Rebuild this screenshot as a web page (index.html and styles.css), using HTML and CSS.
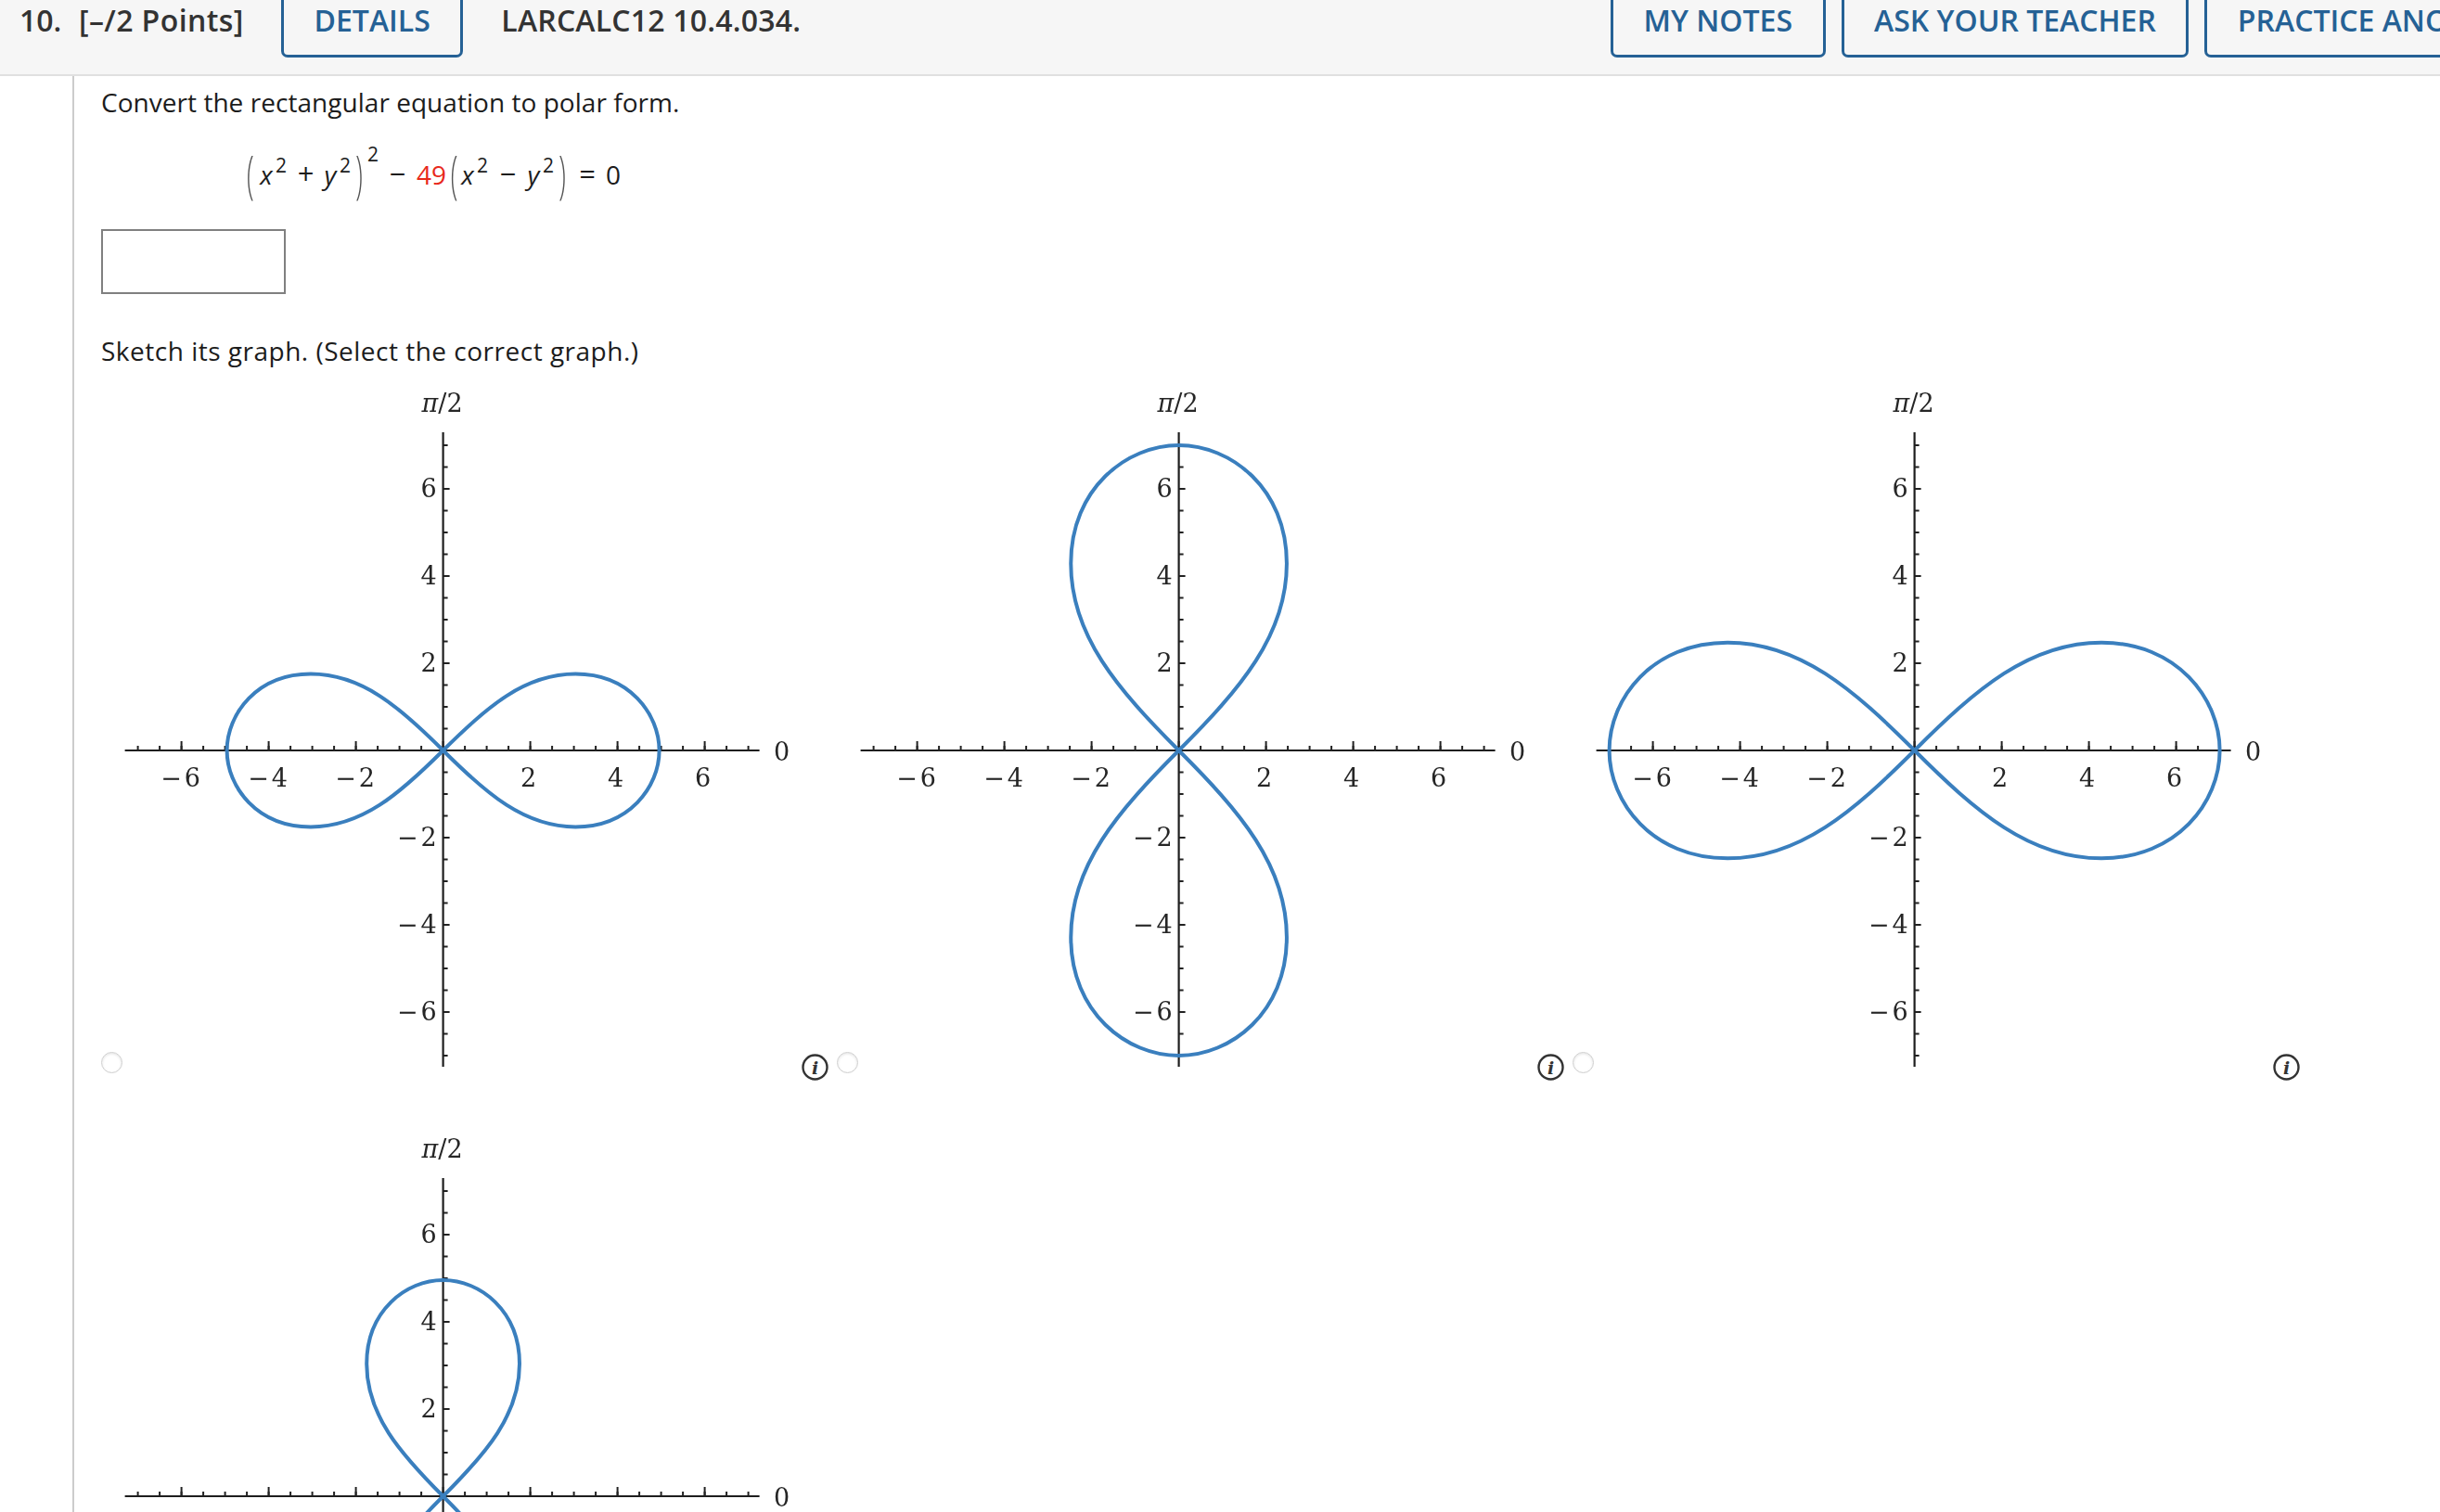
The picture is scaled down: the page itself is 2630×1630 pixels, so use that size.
FILE: index.html
```html
<!DOCTYPE html>
<html lang="en">
<head>
<meta charset="utf-8">
<title>LARCALC12 10.4.034</title>
<link rel="stylesheet" href="styles.css">
</head>
<body>
<svg class="defs" width="0" height="0" aria-hidden="true">
  <defs>
    <path id="lobes" d="M0 0C.2 -.2 .3764 -.3536 .6124 -.3536C.8594 -.3536 1 -.17 1 0C1 .17 .8594 .3536 .6124 .3536C.3764 .3536 .2 .2 0 0C-.2 -.2 -.3764 -.3536 -.6124 -.3536C-.8594 -.3536 -1 -.17 -1 0C-1 .17 -.8594 .3536 -.6124 .3536C-.3764 .3536 -.2 .2 0 0Z"/>
    <g id="axes">
      <line class="axis" x1="-343" y1="0" x2="341" y2="0"/>
      <line class="axis" x1="0" y1="-343" x2="0" y2="341"/>
      <line class="tick-minor" x1="-330" y1="-2.5" x2="330" y2="-2.5"/>
      <line class="tick-major-x" x1="-283" y1="-5" x2="284" y2="-5"/>
      <line class="tick-minor" x1="2.5" y1="-330" x2="2.5" y2="330"/>
      <line class="tick-major-y" x1="3.5" y1="-283" x2="3.5" y2="284"/>
    </g>
  </defs>
</svg>

<header class="qbar">
  <div class="qinfo">
    <span class="qnum">10.</span>
    <span class="qpts">[–/2 Points]</span>
    <a class="btn btn-details">DETAILS</a>
    <span class="qcode">LARCALC12 10.4.034.</span>
  </div>
  <a class="btn">MY NOTES</a>
  <a class="btn">ASK YOUR TEACHER</a>
  <a class="btn">PRACTICE ANOTHER</a>
</header>

<main class="qbody">
  <p class="line line-first">Convert the rectangular equation to polar form.</p>
  <div class="eq">
    <span class="paren paren-first">(</span><i class="v">x</i><span class="sup">2</span><span class="op op-plus">+</span><i class="v">y</i><span class="sup">2</span><span class="paren">)</span><span class="sup sup-hi">2</span><span class="op op-minus">−</span><span class="coef">49</span><span class="paren paren-b">(</span><i class="v">x</i><span class="sup">2</span><span class="op op-minus2">−</span><i class="v">y</i><span class="sup">2</span><span class="paren">)</span><span class="op op-eq">=</span><span class="zero">0</span>
  </div>
  <div class="answer"></div>
  <p class="line line-sketch">Sketch its graph. (Select the correct graph.)</p>

  <div class="choices">
    <div class="choice">
      <input class="radio" type="radio" name="graph">
      <svg class="plot" viewBox="-345.6 -389 732 740">
        <use href="#axes"/>
        <use href="#lobes" class="curve" transform="scale(233)"/>
        <text class="lbl" x="-1" y="-365"><tspan class="pi">π</tspan>/2</text>
        <text class="lbl" x="365" y="10.5">0</text>
        <text class="lbl" x="-283" y="38.5">−&#8202;6</text><text class="lbl" x="-189" y="38.5">−&#8202;4</text><text class="lbl" x="-95" y="38.5">−&#8202;2</text><text class="lbl" x="92" y="38.5">2</text><text class="lbl" x="186" y="38.5">4</text><text class="lbl" x="280" y="38.5">6</text>
        <text class="lbl lbl-y" x="-7" y="-273.5">6</text><text class="lbl lbl-y" x="-7" y="-179.5">4</text><text class="lbl lbl-y" x="-7" y="-85.5">2</text><text class="lbl lbl-y" x="-7" y="102.5">−&#8202;2</text><text class="lbl lbl-y" x="-7" y="196.5">−&#8202;4</text><text class="lbl lbl-y" x="-7" y="290.5">−&#8202;6</text>
      </svg>
      <svg class="info" viewBox="0 0 29 29"><circle cx="14.5" cy="14.5" r="13"/><text x="14.5" y="21.5">i</text></svg>
    </div>
    <div class="choice">
      <input class="radio" type="radio" name="graph">
      <svg class="plot" viewBox="-345.6 -389 732 740">
        <use href="#axes"/>
        <use href="#lobes" class="curve" transform="rotate(90) scale(329)"/>
        <text class="lbl" x="-1" y="-365"><tspan class="pi">π</tspan>/2</text>
        <text class="lbl" x="365" y="10.5">0</text>
        <text class="lbl" x="-283" y="38.5">−&#8202;6</text><text class="lbl" x="-189" y="38.5">−&#8202;4</text><text class="lbl" x="-95" y="38.5">−&#8202;2</text><text class="lbl" x="92" y="38.5">2</text><text class="lbl" x="186" y="38.5">4</text><text class="lbl" x="280" y="38.5">6</text>
        <text class="lbl lbl-y" x="-7" y="-273.5">6</text><text class="lbl lbl-y" x="-7" y="-179.5">4</text><text class="lbl lbl-y" x="-7" y="-85.5">2</text><text class="lbl lbl-y" x="-7" y="102.5">−&#8202;2</text><text class="lbl lbl-y" x="-7" y="196.5">−&#8202;4</text><text class="lbl lbl-y" x="-7" y="290.5">−&#8202;6</text>
      </svg>
      <svg class="info" viewBox="0 0 29 29"><circle cx="14.5" cy="14.5" r="13"/><text x="14.5" y="21.5">i</text></svg>
    </div>
    <div class="choice">
      <input class="radio" type="radio" name="graph">
      <svg class="plot" viewBox="-345.6 -389 732 740">
        <use href="#axes"/>
        <use href="#lobes" class="curve" transform="scale(329)"/>
        <text class="lbl" x="-1" y="-365"><tspan class="pi">π</tspan>/2</text>
        <text class="lbl" x="365" y="10.5">0</text>
        <text class="lbl" x="-283" y="38.5">−&#8202;6</text><text class="lbl" x="-189" y="38.5">−&#8202;4</text><text class="lbl" x="-95" y="38.5">−&#8202;2</text><text class="lbl" x="92" y="38.5">2</text><text class="lbl" x="186" y="38.5">4</text><text class="lbl" x="280" y="38.5">6</text>
        <text class="lbl lbl-y" x="-7" y="-273.5">6</text><text class="lbl lbl-y" x="-7" y="-179.5">4</text><text class="lbl lbl-y" x="-7" y="-85.5">2</text><text class="lbl lbl-y" x="-7" y="102.5">−&#8202;2</text><text class="lbl lbl-y" x="-7" y="196.5">−&#8202;4</text><text class="lbl lbl-y" x="-7" y="290.5">−&#8202;6</text>
      </svg>
      <svg class="info" viewBox="0 0 29 29"><circle cx="14.5" cy="14.5" r="13"/><text x="14.5" y="21.5">i</text></svg>
    </div>
    <div class="choice">
      <input class="radio" type="radio" name="graph">
      <svg class="plot" viewBox="-345.6 -389 732 740">
        <use href="#axes"/>
        <use href="#lobes" class="curve" transform="rotate(90) scale(233)"/>
        <text class="lbl" x="-1" y="-365"><tspan class="pi">π</tspan>/2</text>
        <text class="lbl" x="365" y="10.5">0</text>
        <text class="lbl" x="-283" y="38.5">−&#8202;6</text><text class="lbl" x="-189" y="38.5">−&#8202;4</text><text class="lbl" x="-95" y="38.5">−&#8202;2</text><text class="lbl" x="92" y="38.5">2</text><text class="lbl" x="186" y="38.5">4</text><text class="lbl" x="280" y="38.5">6</text>
        <text class="lbl lbl-y" x="-7" y="-273.5">6</text><text class="lbl lbl-y" x="-7" y="-179.5">4</text><text class="lbl lbl-y" x="-7" y="-85.5">2</text><text class="lbl lbl-y" x="-7" y="102.5">−&#8202;2</text><text class="lbl lbl-y" x="-7" y="196.5">−&#8202;4</text><text class="lbl lbl-y" x="-7" y="290.5">−&#8202;6</text>
      </svg>
      <svg class="info" viewBox="0 0 29 29"><circle cx="14.5" cy="14.5" r="13"/><text x="14.5" y="21.5">i</text></svg>
    </div>
  </div>
</main>
</body>
</html>
```

FILE: styles.css
```css
html, body {
  margin: 0;
  height: 1630px;
  overflow: hidden;
  background: #fff;
  font-family: "Open Sans", "Noto Sans", sans-serif;
  color: #1c1c1c;
}
.defs { display: block; height: 0; }

/* question header */
.qbar {
  display: flex;
  align-items: flex-start;
  height: 80px;
  padding-left: 21px;
  background: #f6f6f6;
  border-bottom: 2px solid #e0e0e0;
  font-size: 32px;
  font-weight: 600;
  line-height: 44px;
  white-space: nowrap;
  overflow: hidden;
}
.qinfo { display: flex; flex: 0 0 1715px; align-items: flex-start; color: #333; }
.qnum { width: 64px; }
.qpts { width: 218px; letter-spacing: 0.4px; }
.qcode { margin-left: 41px; letter-spacing: 0.2px; }
.btn {
  flex: none;
  height: 62px;
  box-sizing: border-box;
  padding: 0 32.5px;
  margin-right: 17px;
  border: 3px solid #256195;
  border-top: 0;
  border-radius: 0 0 7px 7px;
  color: #256195;
}
.btn-details { margin-right: 0; }

/* question body */
.qbody {
  margin-left: 78px;
  padding: 8px 0 0 29px;
  border-left: 2px solid #ccc;
  height: 1540px;
}
.line { margin: 0; font-size: 28px; line-height: 40px; }
.line-first { letter-spacing: 0.04px; }
.line-sketch { letter-spacing: 0.5px; }

/* equation: each token sits in a fixed slot, as in typeset math */
.eq {
  display: flex;
  align-items: baseline;
  height: 117px;
  box-sizing: border-box;
  margin-left: 157px;
  padding-top: 37px;
  font-size: 28px;
  line-height: 40px;
  white-space: nowrap;
}
.eq > * { flex: none; text-align: center; font-style: normal; }
.eq .v { font-style: italic; width: 16px; }
.sup { width: 16px; font-size: 21px; line-height: 21px; transform: translateY(-13px); }
.sup-hi { transform: translateY(-25px); }
.paren { width: 14px; font-weight: 300; color: #555; transform: scaleY(2); transform-origin: 50% 55%; }
.paren-first { text-align: left; width: 13px; }
.paren-b { width: 13px; }
.op { font-size: 31px; }
.op-plus { width: 37px; }
.op-minus { width: 37px; }
.op-minus2 { width: 39px; }
.op-eq { width: 40px; }
.coef { width: 36px; color: #e8291c; }
.zero { width: 16px; }

.answer {
  box-sizing: border-box;
  width: 199px;
  height: 70px;
  margin-bottom: 41px;
  border: 2px solid #808080;
  background: #fff;
}

/* graph choices */
.choices {
  display: grid;
  grid-template-columns: repeat(3, 793px);
  row-gap: 59px;
  margin-top: 22px;
}
.choice { display: flex; align-items: flex-start; }
.radio {
  appearance: none;
  flex: none;
  box-sizing: border-box;
  width: 23px;
  height: 23px;
  margin: 714px 0 0;
  border: 1px solid #cfcfcf;
  border-radius: 50%;
  background: #fff;
  box-shadow: inset 0 1px 3px #e2e2e2;
}
.plot { flex: none; width: 732px; height: 740px; filter: blur(0.35px); }
.info { flex: none; width: 29px; height: 29px; margin-top: 716px; }
.info circle { fill: #fff; stroke: #333; stroke-width: 2.4; }
.info text {
  font-family: "DejaVu Serif", serif;
  font-size: 19px;
  font-style: italic;
  font-weight: 700;
  fill: #333;
  text-anchor: middle;
}

.axis { stroke: #1e1e1e; stroke-width: 2.2; }
.tick-minor { stroke: #222; stroke-width: 5; stroke-dasharray: 2 21.5; fill: none; }
.tick-major-x { stroke: #222; stroke-width: 10; stroke-dasharray: 2 92; fill: none; }
.tick-major-y { stroke: #222; stroke-width: 7; stroke-dasharray: 2 92; fill: none; }
.curve { fill: none; stroke: #3a7fbe; stroke-width: 4px; }
#lobes { vector-effect: non-scaling-stroke; }
.lbl {
  font-family: "DejaVu Serif", serif;
  font-size: 27px;
  fill: #262626;
  text-anchor: middle;
}
.lbl-y { text-anchor: end; }
.pi { font-style: italic; }
```
